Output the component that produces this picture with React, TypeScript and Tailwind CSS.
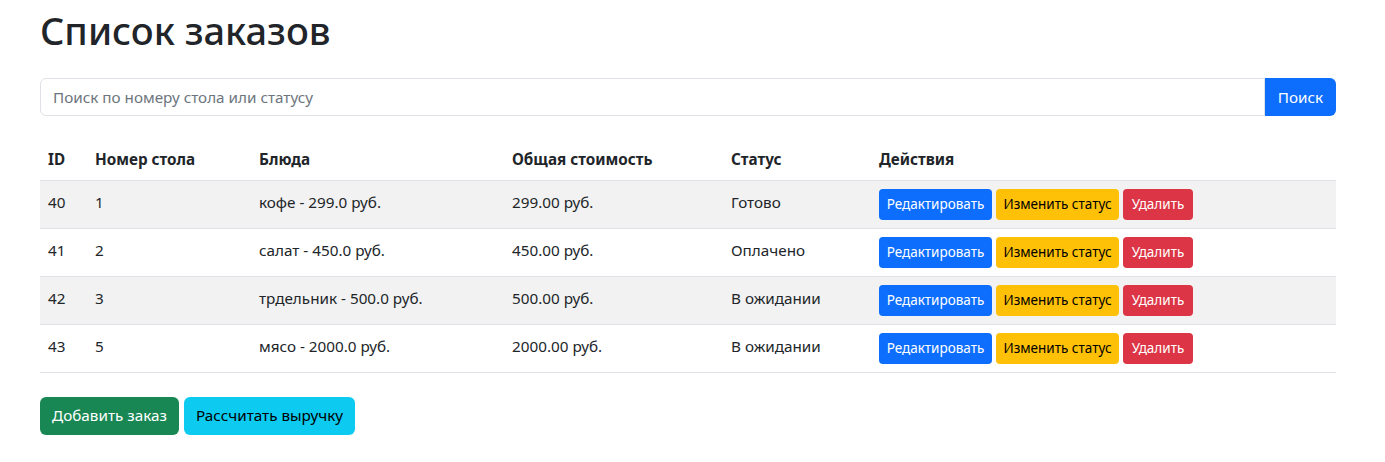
const orders = [
  { id: 40, table: 1, dishes: 'кофе - 299.0 руб.', total: '299.00 руб.', status: 'Готово' },
  { id: 41, table: 2, dishes: 'салат - 450.0 руб.', total: '450.00 руб.', status: 'Оплачено' },
  { id: 42, table: 3, dishes: 'трдельник - 500.0 руб.', total: '500.00 руб.', status: 'В ожидании' },
  { id: 43, table: 5, dishes: 'мясо - 2000.0 руб.', total: '2000.00 руб.', status: 'В ожидании' },
];

function App() {
  return (
    <div className="min-h-[462px] bg-white pl-[40px] pt-[6px] text-[15.25px] text-[#212529] font-['Noto_Sans',sans-serif]">
      <div className="w-[1296px]">
        <h1 className="text-[38px] font-medium leading-[48px] mb-[24px]">Список заказов</h1>

        <div className="flex h-[38px] mb-[24px]">
          <input
            className="flex-grow rounded-l-[6px] border border-[#dee2e6] px-[12px] text-[15.25px] placeholder:text-[#6c757d] outline-none"
            placeholder="Поиск по номеру стола или статусу"
          />
          <button className="w-[71px] rounded-r-[6px] bg-[#0d6efd] text-white">Поиск</button>
        </div>

        <table className="w-full border-collapse mb-[24px]">
          <thead>
            <tr className="h-[40px] border-b border-[#dee2e6] text-left">
              <th className="w-[47px] px-[8px] font-bold">ID</th>
              <th className="w-[164px] px-[8px] font-bold">Номер стола</th>
              <th className="w-[253px] px-[8px] font-bold">Блюда</th>
              <th className="w-[219px] px-[8px] font-bold">Общая стоимость</th>
              <th className="w-[148px] px-[8px] font-bold">Статус</th>
              <th className="px-[8px] font-bold">Действия</th>
            </tr>
          </thead>
          <tbody>
            {orders.map((order, index) => (
              <tr
                key={order.id}
                className={index % 2 === 0 ? 'h-[48px] border-b border-[#dee2e6] bg-[#f2f2f2]' : 'h-[48px] border-b border-[#dee2e6]'}
              >
                <td className="px-[8px] pb-[4px]">{order.id}</td>
                <td className="px-[8px] pb-[4px]">{order.table}</td>
                <td className="px-[8px] pb-[4px]">{order.dishes}</td>
                <td className="px-[8px] pb-[4px]">{order.total}</td>
                <td className="px-[8px] pb-[4px]">{order.status}</td>
                <td className="px-[8px]">
                  <div className="flex gap-[4px] text-[13.5px]">
                    <button className="h-[31px] w-[113px] rounded-[4px] bg-[#0d6efd] text-white">Редактировать</button>
                    <button className="h-[31px] w-[123px] rounded-[4px] bg-[#ffc107] text-black">Изменить статус</button>
                    <button className="h-[31px] w-[70px] rounded-[4px] bg-[#dc3545] text-white">Удалить</button>
                  </div>
                </td>
              </tr>
            ))}
          </tbody>
        </table>

        <div className="flex gap-[5px]">
          <button className="h-[38px] w-[139px] rounded-[6px] bg-[#198754] text-white">Добавить заказ</button>
          <button className="h-[38px] w-[171px] rounded-[6px] bg-[#0dcaf0] text-black">Рассчитать выручку</button>
        </div>
      </div>
    </div>
  );
}

export default App;
